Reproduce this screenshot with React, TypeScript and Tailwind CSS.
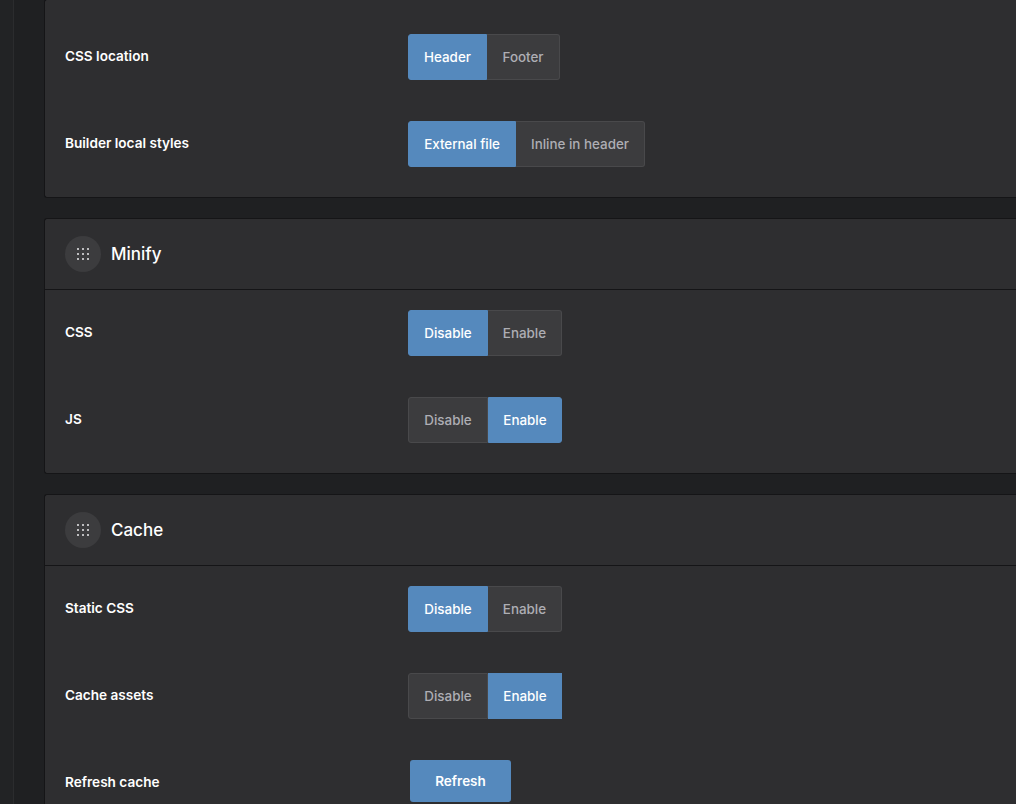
import React, { FC } from "react";

type Opt = { label: string; w: string; active?: boolean };

const Segmented: FC<{ options: Opt[]; squareEnd?: boolean }> = ({ options, squareEnd }) => (
    <div className="flex">
        {options.map((o, i) => (
            <div
                key={o.label}
                className={
                    (o.active
                        ? "bg-[#5589bd] text-white border-[#5589bd] "
                        : "bg-[#3c3c3e] text-[#aeaeb4] border-[#49494b] ") +
                    o.w +
                    " h-[46px] flex items-center justify-center border text-[13.4px] font-medium " +
                    (i === 0 ? "rounded-l-[3px] " : squareEnd ? "" : "rounded-r-[3px] ") +
                    (i === 1 && !o.active ? "border-l-0 " : "")
                }
            >
                {o.label}
            </div>
        ))}
    </div>
);

const Row: FC<{ label: string; children: React.ReactNode }> = ({ label, children }) => (
    <div className="flex items-center h-[46px]">
        <div className="w-[343px] pb-0.5 text-[13.6px] font-semibold text-white">{label}</div>
        {children}
    </div>
);

const Grip = () => (
    <div className="w-9 h-9 rounded-full bg-[#3c3c3e] flex items-center justify-center">
        <svg width="14" height="14" viewBox="0 0 14 14" fill="#bdbdbf">
            {[1, 6, 11].map((y) =>
                [1, 6, 11].map((x) => <rect key={x + "-" + y} x={x} y={y} width="2" height="2" />)
            )}
        </svg>
    </div>
);

const Card: FC<{ title?: string; children: React.ReactNode }> = ({ title, children }) => (
    <div className="bg-[#2e2e30] border border-[#151517] border-r-0 rounded-l-[3px]">
        {title && (
            <div className="h-[71px] flex items-center gap-2.5 px-5 border-b border-[#151517]">
                <Grip />
                <span className="pt-0.5 text-[17px] font-medium text-white">{title}</span>
            </div>
        )}
        <div className="pl-5 pt-5 pb-[30px] flex flex-col gap-[41px]">{children}</div>
    </div>
);

export default function App() {
    return (
        <div className="w-[1016px] h-[804px] overflow-hidden flex bg-[#1f2022] font-['Inter',sans-serif]">
            <div className="w-[14px] shrink-0 bg-[#222325] border-r border-[#2b2c2e]" />
            <div className="flex-1 pl-[30px] flex flex-col gap-5 -mt-px">
                <Card>
                    <div className="pt-[14px] flex flex-col gap-[41px]">
                        <Row label="CSS location">
                            <Segmented
                                options={[
                                    { label: "Header", w: "w-[79px]", active: true },
                                    { label: "Footer", w: "w-[73px]" },
                                ]}
                            />
                        </Row>
                        <Row label="Builder local styles">
                            <Segmented
                                options={[
                                    { label: "External file", w: "w-[108px]", active: true },
                                    { label: "Inline in header", w: "w-[129px]" },
                                ]}
                            />
                        </Row>
                    </div>
                </Card>
                <Card title="Minify">
                    <Row label="CSS">
                        <Segmented
                            options={[
                                { label: "Disable", w: "w-[80px]", active: true },
                                { label: "Enable", w: "w-[74px]" },
                            ]}
                        />
                    </Row>
                    <Row label="JS">
                        <Segmented
                            options={[
                                { label: "Disable", w: "w-[80px]" },
                                { label: "Enable", w: "w-[74px]", active: true },
                            ]}
                        />
                    </Row>
                </Card>
                <Card title="Cache">
                    <Row label="Static CSS">
                        <Segmented
                            options={[
                                { label: "Disable", w: "w-[80px]", active: true },
                                { label: "Enable", w: "w-[74px]" },
                            ]}
                        />
                    </Row>
                    <Row label="Cache assets">
                        <Segmented
                            squareEnd
                            options={[
                                { label: "Disable", w: "w-[80px]" },
                                { label: "Enable", w: "w-[74px]", active: true },
                            ]}
                        />
                    </Row>
                    <Row label="Refresh cache">
                        <button className="ml-0.5 self-start h-[42px] w-[101px] rounded-[3px] bg-[#5589bd] text-white text-[13.5px] font-semibold">
                            Refresh
                        </button>
                    </Row>
                </Card>
            </div>
        </div>
    );
}
